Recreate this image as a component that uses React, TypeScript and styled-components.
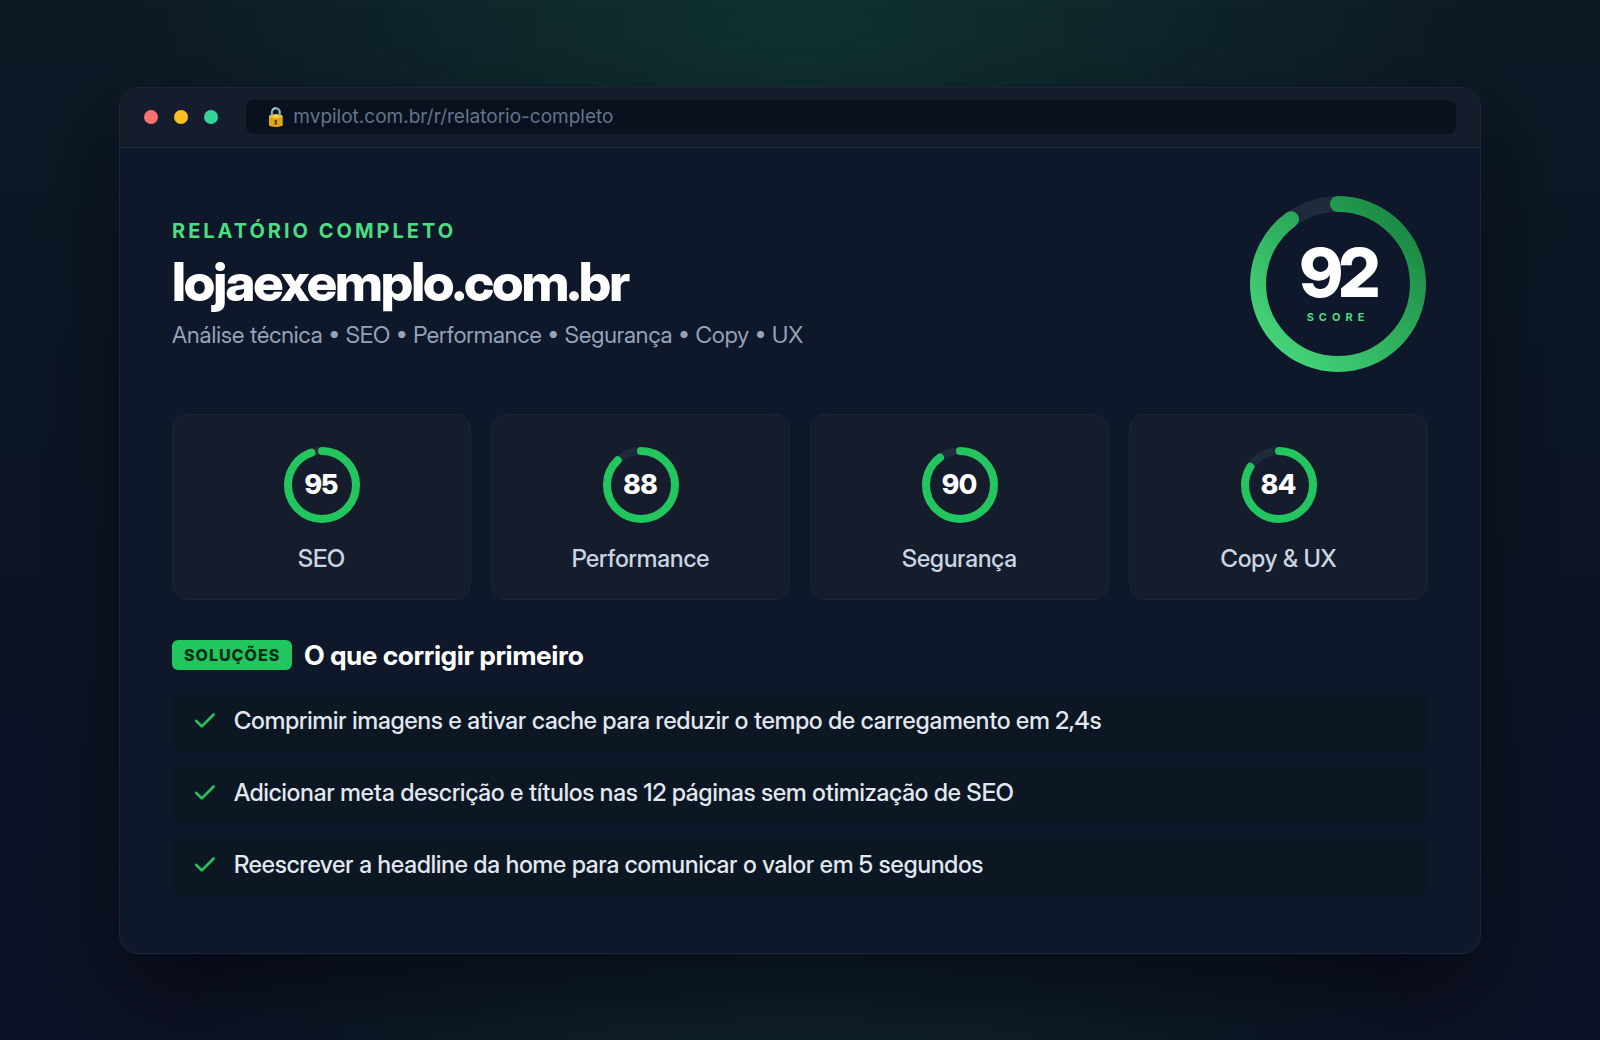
import React from "react";
import styled, { createGlobalStyle } from "styled-components";

const text = `Inter, "Liberation Sans", sans-serif`;
const display = `"Inter Display", Inter, "Liberation Sans", sans-serif`;

const GlobalStyle = createGlobalStyle`
  *, *::before, *::after { box-sizing: border-box; }
  body {
    margin: 0;
    background: #0b1120;
    font-family: ${text};
  }
  h1, h2, p, ul { margin: 0; padding: 0; }
`;

const Page = styled.main`
  min-height: 100vh;
  display: grid;
  align-items: center;
  padding: 80px max(24px, calc(50vw - 681px));
  background:
    radial-gradient(ellipse 60% 60% at 50% 3%, rgba(34, 197, 94, 0.15), transparent 70%),
    radial-gradient(ellipse 60% 50% at 50% 110%, rgba(34, 197, 94, 0.12), transparent 70%),
    linear-gradient(180deg, #0d1a26 0%, #0d1526 50%, #0d1226 100%);
`;

const Window = styled.section`
  border: 1px solid rgba(255, 255, 255, 0.06);
  border-radius: 20px;
  overflow: hidden;
  background: #0f172a;
  box-shadow: 0 40px 100px rgba(0, 0, 0, 0.5);
`;

const TitleBar = styled.header`
  display: flex;
  align-items: center;
  gap: 28px;
  padding: 12px 24px 13px;
  background: #151d2c;
  border-bottom: 1px solid #202938;
`;

const Dots = styled.div`
  display: flex;
  gap: 16px;
`;

const Dot = styled.span<{ $color: string }>`
  width: 14px;
  height: 14px;
  border-radius: 50%;
  background: ${(p) => p.$color};
`;

const Address = styled.p`
  flex: 1;
  padding: 0 18px;
  border-radius: 8px;
  background: #09111e;
  color: #64748b;
  font-size: 19px;
  line-height: 34px;
`;

const Body = styled.div`
  padding: 46px 52px 57px;
`;

const Hero = styled.div`
  display: flex;
  align-items: center;
  justify-content: space-between;
  gap: 40px;
  margin-bottom: 40px;
`;

const Eyebrow = styled.p`
  color: #4ade80;
  font-size: 20px;
  font-weight: 700;
  line-height: 24px;
  letter-spacing: 3px;
  text-transform: uppercase;
`;

const Domain = styled.h1`
  margin: 7px 0;
  color: #fff;
  font-family: ${display};
  font-size: 53px;
  font-weight: 800;
  line-height: 64px;
  letter-spacing: -2px;
`;

const Summary = styled.p`
  color: #94a3b8;
  font-family: ${display};
  font-size: 23px;
  line-height: 28px;
`;

const Ring = styled.div<{ $size: number }>`
  display: grid;
  flex: none;
  width: ${(p) => p.$size}px;
  height: ${(p) => p.$size}px;
  place-items: center;

  > * { grid-area: 1 / 1; }
`;

const RingDrawing = styled.svg`
  display: block;
  transform: rotate(-90deg);
  fill: none;
`;

const TotalText = styled.div`
  display: grid;
  justify-items: center;
  gap: 3px;
  padding-bottom: 8px;
`;

const TotalValue = styled.strong`
  color: #fff;
  font-family: ${display};
  font-size: 68px;
  font-weight: 800;
  line-height: 72px;
  letter-spacing: -4px;
`;

const TotalLabel = styled.span`
  color: #4ade80;
  font-size: 11px;
  font-weight: 700;
  line-height: 12px;
  letter-spacing: 5px;
`;

const Cards = styled.div`
  display: grid;
  grid-template-columns: repeat(4, 1fr);
  gap: 20px;
  margin-bottom: 40px;
`;

const Card = styled.article`
  display: grid;
  justify-items: center;
  gap: 18px;
  padding: 28px 16px 26px;
  border: 1px solid #1c2534;
  border-radius: 16px;
  background: #151d2c;
`;

const CardValue = styled.strong`
  color: #fff;
  font-family: ${display};
  font-size: 27px;
  font-weight: 800;
  line-height: 32px;
`;

const CardLabel = styled.p`
  color: #cbd5e1;
  font-family: ${display};
  font-size: 24px;
  font-weight: 500;
  line-height: 28px;
`;

const SectionHead = styled.div`
  display: flex;
  align-items: center;
  gap: 12px;
  margin-bottom: 18px;
`;

const Badge = styled.span`
  margin-bottom: 2px;
  padding: 0 12px;
  border-radius: 6px;
  background: #22c55e;
  color: #052e16;
  font-size: 16px;
  font-weight: 800;
  line-height: 30px;
  letter-spacing: 1px;
`;

const SectionTitle = styled.h2`
  color: #fff;
  font-family: ${display};
  font-size: 27px;
  font-weight: 700;
  line-height: 32px;
`;

const Fixes = styled.ul`
  display: grid;
  gap: 10px;
  list-style: none;
`;

const Fix = styled.li`
  display: flex;
  align-items: center;
  gap: 16px;
  min-height: 62px;
  padding: 0 20px;
  border-radius: 12px;
  background: #0d1724;
  color: #e2e8f0;
  font-family: ${display};
  font-size: 24px;
  font-weight: 500;
  line-height: 28px;
`;

const CheckDrawing = styled.svg`
  flex: none;
  fill: none;
  stroke: #22c55e;
  stroke-width: 2.4;
  stroke-linecap: round;
  stroke-linejoin: round;
`;

const Check = () => (
  <CheckDrawing width="26" height="26" viewBox="0 0 24 24" aria-hidden="true">
    <path d="M20 6 9 17l-5-5" />
  </CheckDrawing>
);

type GaugeProps = {
  size: number;
  radius: number;
  width: number;
  fill: number;
  stroke: string;
  children: React.ReactNode;
};

const Gauge = ({ size, radius, width, fill, stroke, children }: GaugeProps) => {
  const c = size / 2;
  return (
    <Ring $size={size}>
      <RingDrawing width={size} height={size} viewBox={`0 0 ${size} ${size}`} aria-hidden="true">
        <defs>
          <linearGradient id="total" x1="0" y1="0" x2="1" y2="1">
            <stop offset="0" stopColor="#4ade80" />
            <stop offset="1" stopColor="#15803d" />
          </linearGradient>
        </defs>
        <circle cx={c} cy={c} r={radius} stroke="#1f2a3a" strokeWidth={width} />
        <circle
          cx={c}
          cy={c}
          r={radius}
          stroke={stroke}
          strokeWidth={width}
          strokeLinecap="round"
          pathLength={100}
          strokeDasharray={`${fill} 100`}
        />
      </RingDrawing>
      {children}
    </Ring>
  );
};

const scores = [
  { label: "SEO", value: 95 },
  { label: "Performance", value: 88 },
  { label: "Segurança", value: 90 },
  { label: "Copy & UX", value: 84 },
];

const fixes = [
  "Comprimir imagens e ativar cache para reduzir o tempo de carregamento em 2,4s",
  "Adicionar meta descrição e títulos nas 12 páginas sem otimização de SEO",
  "Reescrever a headline da home para comunicar o valor em 5 segundos",
];

export default function App() {
  return (
    <Page>
      <GlobalStyle />
      <Window>
        <TitleBar>
          <Dots>
            <Dot $color="#f87171" />
            <Dot $color="#fbbf24" />
            <Dot $color="#34d399" />
          </Dots>
          <Address>🔒 mvpilot.com.br/r/relatorio-completo</Address>
        </TitleBar>
        <Body>
          <Hero>
            <div>
              <Eyebrow>Relatório completo</Eyebrow>
              <Domain>lojaexemplo.com.br</Domain>
              <Summary>Análise técnica • SEO • Performance • Segurança • Copy • UX</Summary>
            </div>
            <Gauge size={180} radius={80} width={16} fill={90} stroke="url(#total)">
              <TotalText>
                <TotalValue>92</TotalValue>
                <TotalLabel>SCORE</TotalLabel>
              </TotalText>
            </Gauge>
          </Hero>
          <Cards>
            {scores.map((s) => (
              <Card key={s.label}>
                <Gauge size={84} radius={34} width={8} fill={s.value} stroke="#22c55e">
                  <CardValue>{s.value}</CardValue>
                </Gauge>
                <CardLabel>{s.label}</CardLabel>
              </Card>
            ))}
          </Cards>
          <SectionHead>
            <Badge>SOLUÇÕES</Badge>
            <SectionTitle>O que corrigir primeiro</SectionTitle>
          </SectionHead>
          <Fixes>
            {fixes.map((text) => (
              <Fix key={text}>
                <Check />
                {text}
              </Fix>
            ))}
          </Fixes>
        </Body>
      </Window>
    </Page>
  );
}
